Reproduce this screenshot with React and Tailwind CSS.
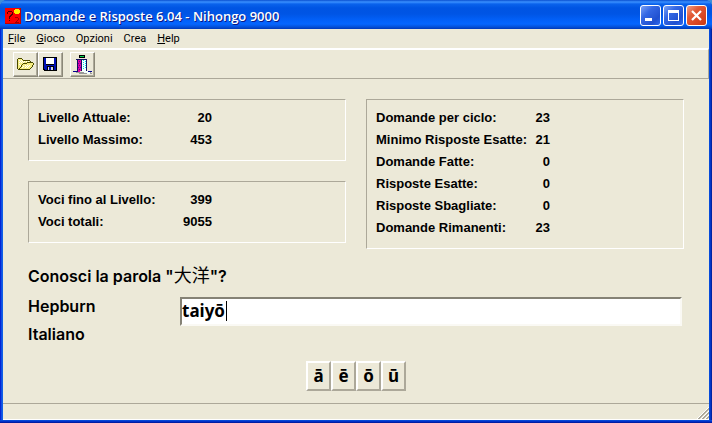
import React, { useState } from 'react';

const menus = [
    { first: 'F', rest: 'ile', underline: true },
    { first: 'G', rest: 'ioco', underline: true },
    { first: 'O', rest: 'pzioni' },
    { first: 'C', rest: 'rea' },
    { first: 'H', rest: 'elp', underline: true },
];

const levels = [
    ['Livello Attuale:', 20],
    ['Livello Massimo:', 453],
];

const entries = [
    ['Voci fino al Livello:', 399],
    ['Voci totali:', 9055],
];

const questions = [
    ['Domande per ciclo:', 23],
    ['Minimo Risposte Esatte:', 21],
    ['Domande Fatte:', 0],
    ['Risposte Esatte:', 0],
    ['Risposte Sbagliate:', 0],
    ['Domande Rimanenti:', 23],
];

const AppIcon = () => (
    <svg width="16" height="16" viewBox="0 0 16 16" shapeRendering="crispEdges" aria-hidden="true">
        <rect width="16" height="16" fill="#fa0000" />
        <path d="M0 15.5h16M15.5 0v16" stroke="#c00000" />
        <path d="M10 1h4v1h1v3h-1v1h-4v-1h-1v-3h1z" fill="#ffee00" />
        <path d="M3 3h4v1h1v3h-1v1h-1v1h-1v2h-1v-3h1v-1h1v-1h1v-2h-4v2h-1v-2h1zM4 12h1v1h-1z" fill="#500000" />
        <path d="M10 9h3v1h1v2h-1v1h-1v1h2v1h-4v-1h1v-1h1v-1h1v-2h-3z" fill="#a00000" />
    </svg>
);

const FolderIcon = () => (
    <svg width="17" height="13" viewBox="0 0 17 13" shapeRendering="crispEdges" aria-hidden="true">
        <path d="M1 1h5v1h7v3h3v1l-3 6h-12z" fill="#f6ee82" />
        <path d="M2 2h1v1h-1zM4 2h1v1h-1zM3 3h1v1h-1zM5 3h1v1h-1zM7 3h1v1h-1zM9 3h1v1h-1zM11 3h1v1h-1zM2 4h1v1h-1zM4 4h1v1h-1zM6 4h1v1h-1zM2 6h1v1h-1zM3 7h1v1h-1zM8 7h1v1h-1zM10 7h1v1h-1zM12 7h1v1h-1zM6 8h1v1h-1zM9 8h1v1h-1zM11 8h1v1h-1zM5 9h1v1h-1zM8 9h1v1h-1zM10 9h1v1h-1z" fill="#fff" />
        <path d="M1 0h4v1h-4zM0 1h1v10h-1zM5 1h1v1h-1zM6 2h7v1h-7zM13 3h1v2h-1zM10 4h6v1h-6zM6 5h4v1h-4zM5 6h1v1h-1zM4 7h1v2h-1zM3 9h1v1h-1zM2 10h1v1h-1zM1 11h12v1h-12zM16 5h1v2h-1zM15 7h1v2h-1zM14 9h1v1h-1zM13 10h1v1h-1z" fill="#4a4a00" />
    </svg>
);

const DiskIcon = () => (
    <svg width="15" height="15" viewBox="0 0 15 15" shapeRendering="crispEdges" aria-hidden="true">
        <path d="M0 0h14v14h-13v-1h-1z" fill="#000" />
        <path d="M1 1h12v12h-11v-1h-1z" fill="#0010b8" />
        <path d="M3 0h8v1h-8zM3 7h8v1h-8z" fill="#000" />
        <path d="M3 1h8v6h-8z" fill="#fff" />
        <path d="M4 9h7v4h-7z" fill="#000" />
        <path d="M5 10h5v3h-5z" fill="#d0d4e8" />
        <path d="M6 10h2v3h-2z" fill="#0010b8" />
    </svg>
);

const ExitIcon = () => (
    <svg width="21" height="21" viewBox="0 0 21 21" shapeRendering="crispEdges" aria-hidden="true">
        <path d="M7 1h6v3h-6z" fill="#000" />
        <path d="M8 2h4v1h-4z" fill="#00d850" />
        <path d="M1 17h4v1h-4zM15 17h5v1h-5z" fill="#000090" />
        <path d="M4 18h15v1h1v1h-13v-1h-3z" fill="#9a9a9a" />
        <path d="M4 5h11v1h-11zM5 6h1v12h-1zM14 6h1v12h-1z" fill="#101060" />
        <path d="M6 6h3v11h-1v1h-2z" fill="#e000a8" />
        <path d="M9 6h1v11h-1z" fill="#101060" />
        <path d="M7 7h1v1h-1zM6 9h1v1h-1zM8 9h1v1h-1zM7 11h1v1h-1zM6 13h1v1h-1zM8 13h1v1h-1zM7 15h1v1h-1z" fill="#6000a0" />
        <path d="M10 6h4v11h2v1h2v2h-3v-1h-3v-1h-2z" fill="#f4ffff" />
        <path d="M11 6h1v1h-1zM13 7h1v1h-1zM11 8h1v1h-1zM13 9h1v1h-1zM11 10h1v1h-1zM13 11h1v1h-1zM11 12h1v1h-1zM13 13h1v1h-1zM11 14h1v1h-1z" fill="#00d8f0" />
    </svg>
);

const StatBox = ({ rows }) => (
    <dl className="border border-t-[#aca899] border-l-[#aca899] border-r-white border-b-white px-[9px] pt-[7px] pb-[9px] text-[13px] leading-[22px] font-bold">
        {rows.map(([label, value]) => (
            <div key={label} className="flex w-[174px] justify-between whitespace-nowrap">
                <dt>{label}</dt>
                <dd>{value}</dd>
            </div>
        ))}
    </dl>
);

const ToolButton = ({ label, children }) => (
    <button
        type="button"
        aria-label={label}
        className="flex size-[25px] items-center justify-center border border-t-white border-l-white border-r-[#8b8878] border-b-[#8b8878] shadow-[inset_-1px_-1px_0_#aca899]"
    >
        {children}
    </button>
);

const captionButton = 'flex size-[21px] items-center justify-center rounded-[3px] border border-white';

const App = () => {
    const [answer, setAnswer] = useState('taiyō');

    return (
        <div className="min-h-screen bg-[#3f8fd8]">
            <div className="flex min-h-screen flex-col overflow-hidden rounded-t-[7px] bg-[linear-gradient(90deg,#0019cf_0,#0831d9_1px,#166aee_2px,#0855dd_3px,#0855dd_calc(100%-3px),#0540d8_calc(100%-2px),#001a90_100%)] px-[3px] font-['Liberation_Sans','Noto_Sans_CJK_JP',sans-serif] text-black">
                {/* Title bar */}
                <header className="-mx-[3px] flex h-[29px] shrink-0 items-center bg-[linear-gradient(180deg,#0a4fd0_0,#3a90ff_2px,#0a62ec_4px,#0054e3_8px,#0055e5_14px,#0260f8_20px,#0566ff_24px,#0450d8_27px,#0038b8_29px)] pt-[2px] pr-[5px] pl-[5px]">
                    <AppIcon />
                    <h1 className="ml-[3px] flex-1 font-['Open_Sans',sans-serif] text-[13px] leading-4 font-semibold whitespace-nowrap text-white [text-shadow:1px_1px_0_#0a1883]">
                        Domande e Risposte 6.04 - Nihongo 9000
                    </h1>
                    <div className="flex gap-[2px]">
                        <button type="button" aria-label="Riduci a icona" className={`${captionButton} bg-[linear-gradient(135deg,#7ba2f5_0%,#3568e4_35%,#2050d0_75%,#2f6cf0_100%)]`}>
                            <svg width="19" height="19" viewBox="0 0 19 19" shapeRendering="crispEdges"><path d="M4 12h7v3h-7z" fill="#fff" /></svg>
                        </button>
                        <button type="button" aria-label="Ingrandisci" className={`${captionButton} bg-[linear-gradient(135deg,#7ba2f5_0%,#3568e4_35%,#2050d0_75%,#2f6cf0_100%)]`}>
                            <svg width="19" height="19" viewBox="0 0 19 19" shapeRendering="crispEdges"><path fillRule="evenodd" d="M4 4h11v11h-11zM5 7v7h9v-7z" fill="#fff" /></svg>
                        </button>
                        <button type="button" aria-label="Chiudi" className={`${captionButton} bg-[linear-gradient(135deg,#f0a088_0%,#e25a36_35%,#d84420_75%,#c83a14_100%)]`}>
                            <svg width="19" height="19" viewBox="0 0 19 19"><path d="M5 5l9 9M14 5l-9 9" stroke="#fff" strokeWidth="2.2" /></svg>
                        </button>
                    </div>
                </header>

                <nav className="flex h-[19px] shrink-0 items-center gap-[11px] bg-[#ece9d8] px-[5px] font-['Roboto',sans-serif] text-[11px] leading-[14px]">
                    {menus.map((menu) => (
                        <button key={menu.rest} type="button">
                            <span className={menu.underline ? 'underline' : ''}>{menu.first}</span>{menu.rest}
                        </button>
                    ))}
                </nav>

                {/* Toolbar */}
                <div className="flex h-[31px] shrink-0 items-center border-t-2 border-r border-b border-t-white border-r-[#aca899] border-b-[#aca899] bg-[#ece9d8] pl-[10px]">
                    <ToolButton label="Apri"><FolderIcon /></ToolButton>
                    <ToolButton label="Salva"><DiskIcon /></ToolButton>
                    <div className="ml-[7px]">
                        <ToolButton label="Esci"><ExitIcon /></ToolButton>
                    </div>
                </div>

                <main className="flex-1 bg-[#ece9d8] px-[25px] pt-[20px] pb-[12px]">
                    <div className="grid grid-cols-2 items-start gap-[20px]">
                        <div className="flex flex-col gap-[20px]">
                            <StatBox rows={levels} />
                            <StatBox rows={entries} />
                        </div>
                        <StatBox rows={questions} />
                    </div>

                    <form onSubmit={(e) => e.preventDefault()}>
                        <p className="mt-[15px] font-['Inter','Noto_Sans_CJK_JP',sans-serif] text-[16px] leading-[24px] font-semibold">
                            Conosci la parola "<span className="text-[18px] font-normal">大洋</span>"?
                        </p>
                        <div className="mt-[9px] flex items-start text-[16px] leading-[18px] font-semibold">
                            <label htmlFor="hepburn" className="w-[152px] font-['Inter',sans-serif]">Hepburn</label>
                            <div className="relative mr-[2px] flex-1">
                                <input
                                    id="hepburn"
                                    type="text"
                                    value={answer}
                                    onChange={(e) => setAnswer(e.target.value)}
                                    className="block h-[29px] w-full border-2 border-t-[#858275] border-l-[#858275] border-r-[#faf9f4] border-b-[#faf9f4] bg-white pb-[2px] font-['Noto_Sans',sans-serif] text-[17px] font-bold caret-transparent outline-none"
                                />
                                {/* text cursor */}
                                <span className="pointer-events-none absolute top-[4px] left-[46px] h-[20px] w-px bg-black" />
                            </div>
                        </div>
                        <p className="font-['Inter',sans-serif] text-[16px] leading-[16px] font-semibold">Italiano</p>
                        <div className="mt-[19px] flex justify-center">
                            {['ā', 'ē', 'ō', 'ū'].map((letter) => (
                                <button
                                    key={letter}
                                    type="button"
                                    onClick={() => setAnswer(answer + letter)}
                                    className="h-[30px] w-[25px] border-2 border-t-white border-l-white border-r-[#aca899] border-b-[#aca899] font-['Noto_Sans',sans-serif] text-[17px] leading-[24px] font-bold"
                                >
                                    {letter}
                                </button>
                            ))}
                        </div>
                    </form>
                </main>

                {/* Status bar */}
                <footer className="flex h-[17px] shrink-0 items-end justify-end border-t border-b border-t-[#aca899] border-b-white bg-[#ece9d8]">
                    <svg width="12" height="12" viewBox="0 0 12 12" aria-hidden="true">
                        <path d="M0 12L12 0M4 12L12 4M8 12L12 8" stroke="#fff" />
                        <path d="M1 12L12 1M2 12L12 2M5 12L12 5M6 12L12 6M9 12L12 9M10 12L12 10" stroke="#aca899" />
                    </svg>
                </footer>
                <div className="-mx-[3px] h-[3px] shrink-0 bg-[linear-gradient(180deg,#0855dd,#0030c8,#001490)]" />
            </div>
        </div>
    );
};

export default App;
